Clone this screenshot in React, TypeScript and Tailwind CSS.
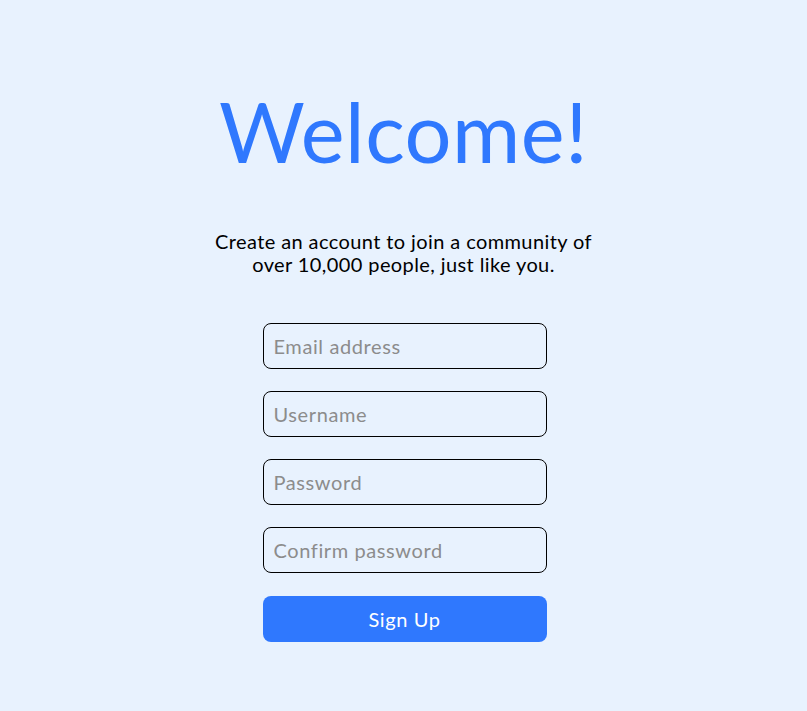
export default function App() {
  const fields = ['Email address', 'Username', 'Password', 'Confirm password'];

  return (
    <div className="min-h-[711px] bg-[#e8f2fe] flex flex-col items-center font-['Lato',sans-serif]">
      <h1 className="mt-[77px] text-[83px] leading-[108px] font-normal text-[#2f78fe] tracking-[0.5px]">Welcome!</h1>

      <p className="mt-[45px] text-center text-[20px] leading-[23px] tracking-[0.4px] text-black">
        Create an account to join a community of
        <br />
        over 10,000 people, just like you.
      </p>

      <form className="mt-[47px] ml-[2px] w-[284px] flex flex-col gap-[22px]" onSubmit={(e) => e.preventDefault()}>
        {fields.map((f) => (
          <input
            key={f}
            type={f.includes('assword') ? 'password' : 'text'}
            placeholder={f}
            className="h-[46px] w-full rounded-[8px] border border-black bg-transparent px-[10px] text-[20px] tracking-[0.6px] placeholder:text-[#8c8c8c] outline-none"
          />
        ))}
        <button className="mt-[1px] h-[46px] w-full rounded-[8px] bg-[#2f78fe] text-white text-[20px] tracking-[0.6px]">Sign Up</button>
      </form>
    </div>
  );
}
